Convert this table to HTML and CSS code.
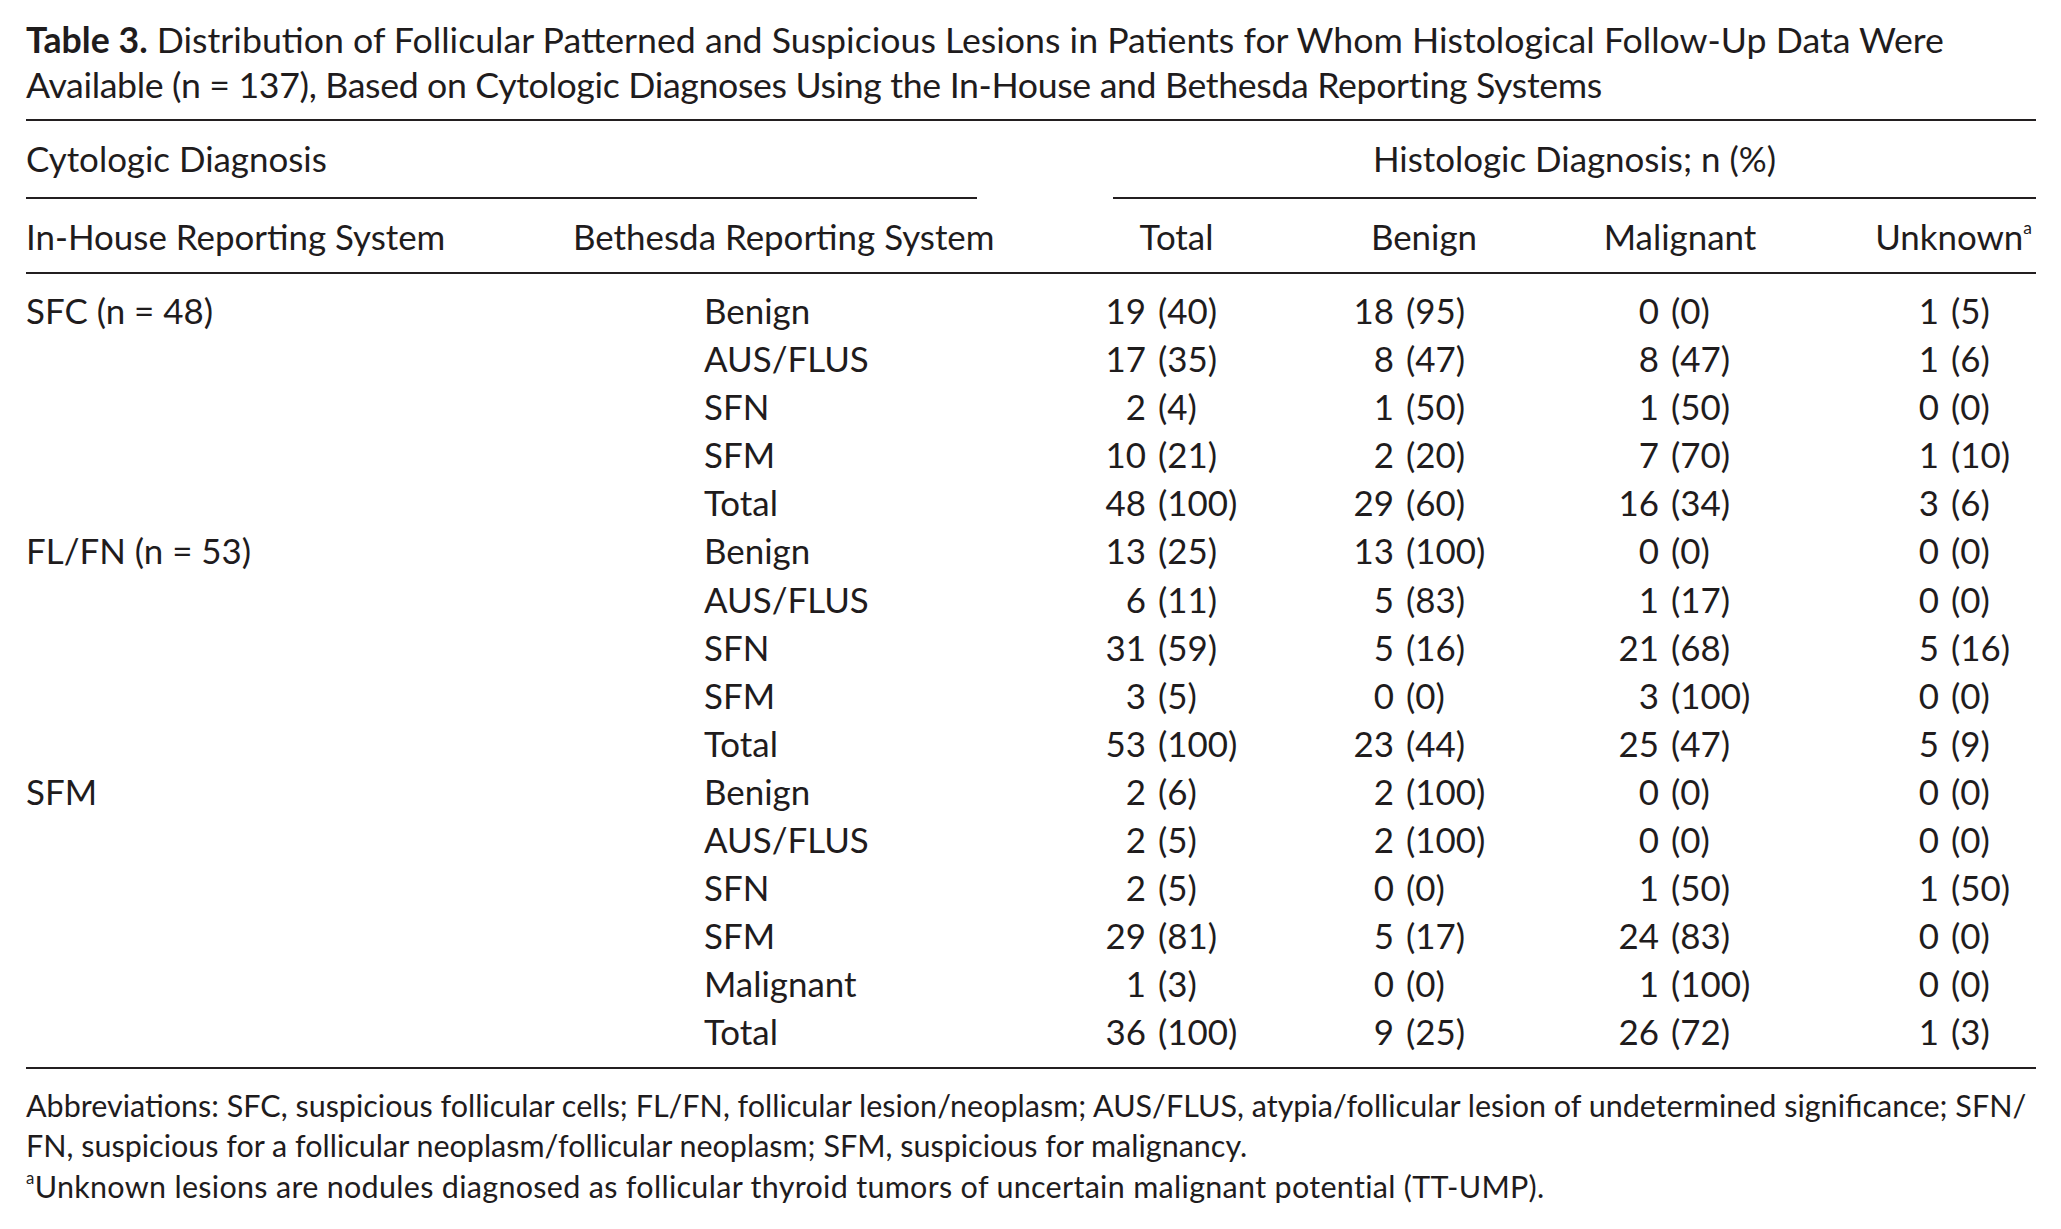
FILE: index.html
```html
<!DOCTYPE html>
<html lang="en">
<head>
<meta charset="utf-8">
<title>Table 3</title>
<link rel="stylesheet" href="styles.css">
</head>
<body>
<div class="page">
  <div class="caption"><b>Table 3.</b> Distribution of Follicular Patterned and Suspicious Lesions in Patients for Whom Histological Follow-Up Data Were<br><span class="caption-cont">Available (n = 137), Based on Cytologic Diagnoses Using the In-House and Bethesda Reporting Systems</span></div>

  <div class="tbl">
    <div class="cols grp-row">
      <div class="grp grp-cyto">Cytologic Diagnosis</div>
      <div class="grp grp-histo">Histologic Diagnosis; n (%)</div>
    </div>
    <div class="cols head-row">
      <div class="hc h-inhouse">In-House Reporting System</div>
      <div class="hc h-beth">Bethesda Reporting System</div>
      <div class="hc h-total">Total</div>
      <div class="hc h-benign">Benign</div>
      <div class="hc h-malig">Malignant</div>
      <div class="hc h-unk">Unknown<sup>a</sup></div>
    </div>
    <div class="tbody">
      <div class="cols row"><div class="c1">SFC (n = 48)</div><div class="c2">Benign</div><div class="v v3"><span class="n">19</span><span class="p">(40)</span></div><div class="v v4"><span class="n">18</span><span class="p">(95)</span></div><div class="v v5"><span class="n">0</span><span class="p">(0)</span></div><div class="v v6"><span class="n">1</span><span class="p">(5)</span></div></div>
      <div class="cols row"><div class="c1"></div><div class="c2">AUS/FLUS</div><div class="v v3"><span class="n">17</span><span class="p">(35)</span></div><div class="v v4"><span class="n">8</span><span class="p">(47)</span></div><div class="v v5"><span class="n">8</span><span class="p">(47)</span></div><div class="v v6"><span class="n">1</span><span class="p">(6)</span></div></div>
      <div class="cols row"><div class="c1"></div><div class="c2">SFN</div><div class="v v3"><span class="n">2</span><span class="p">(4)</span></div><div class="v v4"><span class="n">1</span><span class="p">(50)</span></div><div class="v v5"><span class="n">1</span><span class="p">(50)</span></div><div class="v v6"><span class="n">0</span><span class="p">(0)</span></div></div>
      <div class="cols row"><div class="c1"></div><div class="c2">SFM</div><div class="v v3"><span class="n">10</span><span class="p">(21)</span></div><div class="v v4"><span class="n">2</span><span class="p">(20)</span></div><div class="v v5"><span class="n">7</span><span class="p">(70)</span></div><div class="v v6"><span class="n">1</span><span class="p">(10)</span></div></div>
      <div class="cols row"><div class="c1"></div><div class="c2">Total</div><div class="v v3"><span class="n">48</span><span class="p">(100)</span></div><div class="v v4"><span class="n">29</span><span class="p">(60)</span></div><div class="v v5"><span class="n">16</span><span class="p">(34)</span></div><div class="v v6"><span class="n">3</span><span class="p">(6)</span></div></div>
      <div class="cols row"><div class="c1">FL/FN (n = 53)</div><div class="c2">Benign</div><div class="v v3"><span class="n">13</span><span class="p">(25)</span></div><div class="v v4"><span class="n">13</span><span class="p">(100)</span></div><div class="v v5"><span class="n">0</span><span class="p">(0)</span></div><div class="v v6"><span class="n">0</span><span class="p">(0)</span></div></div>
      <div class="cols row"><div class="c1"></div><div class="c2">AUS/FLUS</div><div class="v v3"><span class="n">6</span><span class="p">(11)</span></div><div class="v v4"><span class="n">5</span><span class="p">(83)</span></div><div class="v v5"><span class="n">1</span><span class="p">(17)</span></div><div class="v v6"><span class="n">0</span><span class="p">(0)</span></div></div>
      <div class="cols row"><div class="c1"></div><div class="c2">SFN</div><div class="v v3"><span class="n">31</span><span class="p">(59)</span></div><div class="v v4"><span class="n">5</span><span class="p">(16)</span></div><div class="v v5"><span class="n">21</span><span class="p">(68)</span></div><div class="v v6"><span class="n">5</span><span class="p">(16)</span></div></div>
      <div class="cols row"><div class="c1"></div><div class="c2">SFM</div><div class="v v3"><span class="n">3</span><span class="p">(5)</span></div><div class="v v4"><span class="n">0</span><span class="p">(0)</span></div><div class="v v5"><span class="n">3</span><span class="p">(100)</span></div><div class="v v6"><span class="n">0</span><span class="p">(0)</span></div></div>
      <div class="cols row"><div class="c1"></div><div class="c2">Total</div><div class="v v3"><span class="n">53</span><span class="p">(100)</span></div><div class="v v4"><span class="n">23</span><span class="p">(44)</span></div><div class="v v5"><span class="n">25</span><span class="p">(47)</span></div><div class="v v6"><span class="n">5</span><span class="p">(9)</span></div></div>
      <div class="cols row"><div class="c1">SFM</div><div class="c2">Benign</div><div class="v v3"><span class="n">2</span><span class="p">(6)</span></div><div class="v v4"><span class="n">2</span><span class="p">(100)</span></div><div class="v v5"><span class="n">0</span><span class="p">(0)</span></div><div class="v v6"><span class="n">0</span><span class="p">(0)</span></div></div>
      <div class="cols row"><div class="c1"></div><div class="c2">AUS/FLUS</div><div class="v v3"><span class="n">2</span><span class="p">(5)</span></div><div class="v v4"><span class="n">2</span><span class="p">(100)</span></div><div class="v v5"><span class="n">0</span><span class="p">(0)</span></div><div class="v v6"><span class="n">0</span><span class="p">(0)</span></div></div>
      <div class="cols row"><div class="c1"></div><div class="c2">SFN</div><div class="v v3"><span class="n">2</span><span class="p">(5)</span></div><div class="v v4"><span class="n">0</span><span class="p">(0)</span></div><div class="v v5"><span class="n">1</span><span class="p">(50)</span></div><div class="v v6"><span class="n">1</span><span class="p">(50)</span></div></div>
      <div class="cols row"><div class="c1"></div><div class="c2">SFM</div><div class="v v3"><span class="n">29</span><span class="p">(81)</span></div><div class="v v4"><span class="n">5</span><span class="p">(17)</span></div><div class="v v5"><span class="n">24</span><span class="p">(83)</span></div><div class="v v6"><span class="n">0</span><span class="p">(0)</span></div></div>
      <div class="cols row"><div class="c1"></div><div class="c2">Malignant</div><div class="v v3"><span class="n">1</span><span class="p">(3)</span></div><div class="v v4"><span class="n">0</span><span class="p">(0)</span></div><div class="v v5"><span class="n">1</span><span class="p">(100)</span></div><div class="v v6"><span class="n">0</span><span class="p">(0)</span></div></div>
      <div class="cols row"><div class="c1"></div><div class="c2">Total</div><div class="v v3"><span class="n">36</span><span class="p">(100)</span></div><div class="v v4"><span class="n">9</span><span class="p">(25)</span></div><div class="v v5"><span class="n">26</span><span class="p">(72)</span></div><div class="v v6"><span class="n">1</span><span class="p">(3)</span></div></div>
    </div>
  </div>

  <div class="notes">
    <p>Abbreviations: SFC, suspicious follicular cells; FL/FN, follicular lesion/neoplasm; AUS/FLUS, atypia/follicular lesion of undetermined significance; SFN/<br>FN, suspicious for a follicular neoplasm/follicular neoplasm; SFM, suspicious for malignancy.</p>
    <p class="fn"><sup>a</sup>Unknown lesions are nodules diagnosed as follicular thyroid tumors of uncertain malignant potential (TT-UMP).</p>
  </div>
</div>
</body>
</html>
```

FILE: styles.css
```css
html, body {
  margin: 0;
  padding: 0;
  background: #ffffff;
}

body {
  font-family: Lato, "Open Sans", "Liberation Sans", sans-serif;
  color: #1f1c1d;
}

.page {
  width: 2010px;
  padding: 17px 0 0 26px;
}

.caption {
  font-size: 35.7px;
  line-height: 45px;
  white-space: nowrap;
}

.caption b {
  font-weight: 700;
}

.caption-cont {
  letter-spacing: -0.35px;
}

.tbl {
  margin-top: 12px;
  border-top: 2px solid #231f20;
  border-bottom: 2px solid #231f20;
  font-size: 34.9px;
}

.cols {
  display: grid;
  grid-template-columns: 534px 500px 260px 260px 270px 186px;
}

.grp {
  padding: 14px 0 14px;
  line-height: 48px;
  border-bottom: 2px solid #231f20;
  white-space: nowrap;
}

.grp-cyto {
  grid-column: 1 / 3;
  margin-right: 83px;
}

.grp-histo {
  grid-column: 3 / 7;
  margin-left: 53px;
  text-align: center;
}

.head-row {
  padding: 14px 0 11px;
  line-height: 48px;
  border-bottom: 2px solid #231f20;
  white-space: nowrap;
}

.hc {
  white-space: nowrap;
}

.h-beth {
  padding-left: 13px;
}

.h-total {
  text-align: center;
  padding-right: 27px;
}

.h-benign {
  text-align: center;
  padding-right: 52px;
}

.h-malig {
  text-align: center;
  padding-right: 70px;
}

.h-unk {
  text-align: right;
  padding-right: 4px;
}

sup {
  font-size: 0.5em;
  line-height: 0;
  vertical-align: 0.9em;
}

.tbody {
  padding: 13px 0 10px;
}

.row {
  height: 48.1px;
  line-height: 48.1px;
  white-space: nowrap;
}

.c2 {
  padding-left: 144px;
}

.n {
  display: inline-block;
  width: 60px;
  text-align: right;
}

.p {
  margin-left: 12px;
}

.v3 { padding-left: 26px; }
.v4 { padding-left: 14px; }
.v5 { padding-left: 19px; }
.v6 { padding-left: 29px; }

.notes {
  padding-top: 16px;
  font-size: 30.5px;
  line-height: 40.5px;
}

.notes p {
  margin: 0;
  white-space: nowrap;
}

.notes .fn {
  letter-spacing: 0.3px;
}

.notes sup {
  font-size: 0.55em;
  vertical-align: 0.85em;
}
```
